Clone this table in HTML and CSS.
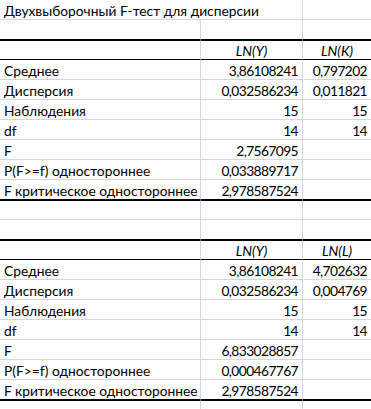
FILE: index.html
```html
<!DOCTYPE html>
<html>
<head>
<meta charset="utf-8">
<link rel="stylesheet" href="styles.css">
</head>
<body>
<div class="sheet">
  <div class="c a title">Двухвыборочный F-тест для дисперсии</div><div class="c b noleft"></div><div class="c"></div>

  <div class="c a pre"></div><div class="c b pre"></div><div class="c pre"></div>

  <div class="c a hdr"></div><div class="c b hdr ctr it">LN(Y)</div><div class="c hdr ctr it">LN(K)</div>
  <div class="c a">Среднее</div><div class="c b num">3,86108241</div><div class="c num">0,797202</div>
  <div class="c a">Дисперсия</div><div class="c b num">0,032586234</div><div class="c num">0,011821</div>
  <div class="c a">Наблюдения</div><div class="c b num">15</div><div class="c num">15</div>
  <div class="c a">df</div><div class="c b num">14</div><div class="c num">14</div>
  <div class="c a">F</div><div class="c b num">2,7567095</div><div class="c"></div>
  <div class="c a">P(F&gt;=f) одностороннее</div><div class="c b num">0,033889717</div><div class="c"></div>
  <div class="c a pre">F критическое одностороннее</div><div class="c b num pre">2,978587524</div><div class="c pre"></div>

  <div class="c a post"></div><div class="c b post"></div><div class="c post"></div>
  <div class="c a pre"></div><div class="c b pre"></div><div class="c pre"></div>

  <div class="c a hdr"></div><div class="c b hdr ctr it">LN(Y)</div><div class="c hdr ctr it">LN(L)</div>
  <div class="c a">Среднее</div><div class="c b num">3,86108241</div><div class="c num">4,702632</div>
  <div class="c a">Дисперсия</div><div class="c b num">0,032586234</div><div class="c num">0,004769</div>
  <div class="c a">Наблюдения</div><div class="c b num">15</div><div class="c num">15</div>
  <div class="c a">df</div><div class="c b num">14</div><div class="c num">14</div>
  <div class="c a">F</div><div class="c b num">6,833028857</div><div class="c"></div>
  <div class="c a">P(F&gt;=f) одностороннее</div><div class="c b num">0,000467767</div><div class="c"></div>
  <div class="c a pre">F критическое одностороннее</div><div class="c b num pre">2,978587524</div><div class="c pre"></div>

  <div class="c a post"></div><div class="c b post"></div><div class="c post"></div>
</div>
</body>
</html>
```
FILE: styles.css
```css
html, body {
  margin: 0;
  padding: 0;
  background: #ffffff;
  overflow: hidden;
}

.sheet {
  display: grid;
  grid-template-columns: 201px 102px 69px;
  grid-auto-rows: 20px;
  font-family: Lato, "Open Sans", "DejaVu Sans", sans-serif;
  font-size: 13.8px;
  color: #000000;
}

.c {
  box-sizing: border-box;
  border-right: 1px solid #d0d7e5;
  border-bottom: 1px solid #d0d7e5;
  line-height: 17px;
  padding: 2px 4px 0 4px;
  white-space: nowrap;
}

.title {
  border-right: none;
  overflow: visible;
  padding-left: 4px;
}

.noleft {
  background: transparent;
}

.pre {
  border-bottom-color: #000000;
}

.post,
.hdr {
  border-top: 1px solid #000000;
  padding-top: 1px;
}

.hdr {
  border-bottom-color: #000000;
}

.num {
  text-align: right;
  padding-right: 4px;
  letter-spacing: -0.6px;
}

.ctr {
  text-align: center;
}

.it {
  font-style: italic;
}
```
